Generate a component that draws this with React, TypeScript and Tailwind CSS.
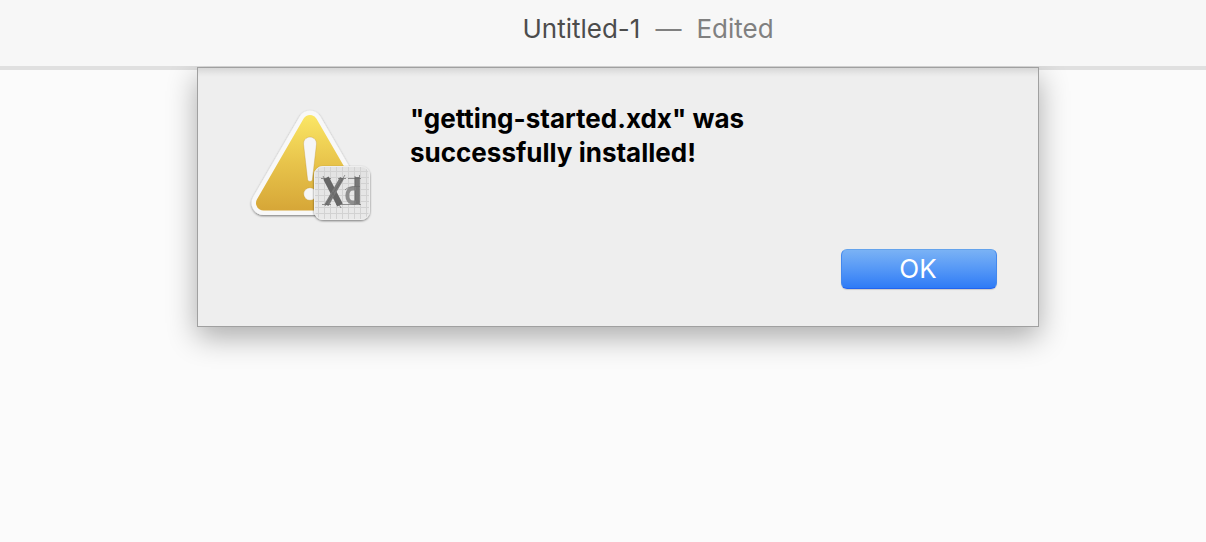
function WarningIcon() {
  const columns = [318, 324, 330, 336, 342, 348, 354, 360, 366];
  const rows = [171, 177, 183, 189, 195, 201, 207, 213];
  return (
    <svg
      role="img"
      aria-label="Warning from Xd"
      viewBox="248 106 128 120"
      className="mt-1 h-[120px] w-[128px] shrink-0"
    >
      <defs>
        <linearGradient id="gold" gradientUnits="userSpaceOnUse" x1="0" y1="114" x2="0" y2="211">
          <stop offset="0" stopColor="#fbe765" />
          <stop offset="0.5" stopColor="#e8c44b" />
          <stop offset="1" stopColor="#d6a637" />
        </linearGradient>
        <linearGradient id="paper" x1="0" y1="0" x2="0" y2="1">
          <stop offset="0" stopColor="#e2e2e2" />
          <stop offset="1" stopColor="#e9e9e9" />
        </linearGradient>
        <filter id="drop" x="-20%" y="-20%" width="140%" height="140%">
          <feDropShadow dx="0" dy="1" stdDeviation="1" floodColor="#000" floodOpacity="0.5" />
        </filter>
        <clipPath id="badge">
          <rect x="314" y="166" width="56" height="54" rx="9" />
        </clipPath>
      </defs>
      <path d="M310 122.5 263.5 203H356.5Z" fill="#f8f8f8" stroke="#f8f8f8" strokeWidth="24" strokeLinejoin="round" filter="url(#drop)" />
      <path d="M310 122.5 263.5 203H356.5Z" fill="url(#gold)" stroke="url(#gold)" strokeWidth="15" strokeLinejoin="round" />
      <g fill="#f6f6f6" stroke="#b98d28" strokeOpacity="0.45" strokeWidth="0.7">
        <path d="M303.5 144C303.3 134.8 316.7 134.8 316.5 144L312.4 179.5C312 182 308 182 307.6 179.5Z" />
        <circle cx="310" cy="194" r="6.3" />
      </g>
      <rect x="314" y="166" width="56" height="54" rx="9" fill="url(#paper)" filter="url(#drop)" />
      <g clipPath="url(#badge)" stroke="#d2d2d2" strokeWidth="1" shapeRendering="crispEdges">
        {columns.map((x) => (
          <path key={x} d={`M${x + 0.5} 166V220`} />
        ))}
        {rows.map((y) => (
          <path key={y} d={`M314 ${y + 0.5}H370`} />
        ))}
      </g>
      <rect x="314.5" y="166.5" width="55" height="53" rx="8.5" fill="none" stroke="#eeeeee" />
      <g fill="none">
        <path d="M326 178 340 205" stroke="#666666" strokeWidth="6" />
        <path d="M342 178 326.5 205" stroke="#787878" strokeWidth="4.5" />
        <path d="M321 178.5H331M338 178.5H346M322 204.5H331M336 204.5H345M323 176 341 208M345 175 325 206" stroke="#666666" strokeWidth="0.7" />
        <path d="M357 177V204" stroke="#777777" strokeWidth="4.5" />
        <path d="M356 188.5H353C345.5 188.5 345.5 202.5 353 202.5H356" stroke="#8e8e8e" strokeWidth="4" />
        <path d="M359.5 175V205M355 176V204M345 204.5H361M348 178.5H361M345 190C349 186 354 186.5 360 186.5" stroke="#686868" strokeWidth="0.7" />
      </g>
    </svg>
  );
}

export default function App() {
  return (
    <div className="flex min-h-screen flex-col bg-[#fbfbfb] font-['Inter',sans-serif]">
      <header className="flex h-[66px] items-start justify-center bg-[#f7f7f7] pt-[13px] pl-[90px]">
        <h1 className="flex gap-[15px] text-[26px] leading-8 whitespace-nowrap text-[#808080]">
          <span className="text-[#4c4c4c]">Untitled-1</span>
          <span>—</span>
          <span>Edited</span>
        </h1>
      </header>
      <main className="flex flex-1 flex-col overflow-hidden">
        <div className="h-1 shrink-0 bg-[#e0e0e0]" />
        <div className="-mt-[3px] flex justify-center pl-[30px]">
          <section
            role="alertdialog"
            aria-labelledby="alert-message"
            className="relative flex w-full max-w-[842px] flex-col border border-[#a0a0a0] bg-[linear-gradient(to_bottom,#d7d7d7,#e8e8e8_6px,#eeeeee_9px)] pt-[34px] pr-[41px] pb-[37px] pl-[50px] shadow-[0_10px_28px_rgba(0,0,0,0.32)]"
          >
            <div className="flex gap-[34px]">
              <WarningIcon />
              <p id="alert-message" className="w-[360px] text-[26px] leading-[34px] font-bold text-black">
                &quot;getting-started.xdx&quot; was successfully installed!
              </p>
            </div>
            <button
              type="button"
              className="mt-[23px] flex h-10 w-[156px] items-center justify-center self-end rounded-md border border-t-[#64a3ec] border-r-[#4388ee] border-b-[#2264f0] border-l-[#4388ee] bg-linear-to-b from-[#7ab2f5] to-[#2e7bf6] pr-0.5 text-[26px] leading-8 text-white shadow-[0_1px_1px_rgba(0,0,0,0.15)]"
            >
              OK
            </button>
          </section>
        </div>
      </main>
    </div>
  );
}
